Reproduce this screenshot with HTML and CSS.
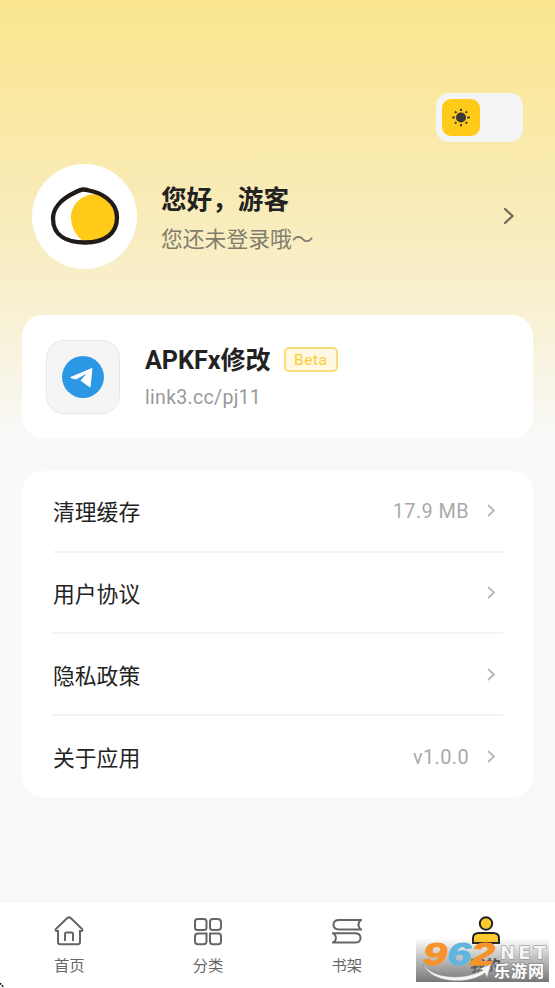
FILE: index.html
```html
<!DOCTYPE html>
<html lang="zh-CN">
<head>
<meta charset="UTF-8">
<title>我的</title>
<link rel="stylesheet" href="styles.css">
</head>
<body>
<div class="app">
  <main class="content">
    <div class="theme-switch">
      <span class="theme-thumb">
        <svg width="20" height="20" viewBox="0 0 20 20"><circle cx="10" cy="9.500" r="5" fill="#3b3935"/><g stroke="#3b3935" stroke-width="1.900"><path d="M10 .7V3M10 16v2.300M1.200 9.500h2.600M16.200 9.500h2.600M4 3.500l1.400 1.400M14.600 14.100l1.400 1.400M4 15.500l1.400-1.400M14.600 4.900 16 3.500"/></g></svg>
      </span>
    </div>
    <section class="profile">
      <div class="avatar">
        <svg width="105" height="105" viewBox="0 0 105 105"><path d="M73 31C53 26 39 39 39 53c0 11 6 21 14 25 19 2 32-7 33-24 0-9-5-17-13-23Z" fill="#ffca18"/><path d="M51 25.500c-3 0-6 2-10 4-12 6-20 15-20 25 0 18 15 24 32 24 20 0 32-9 32-25 0-17-17-25-28-27-3-1-4-1-6-1Z" fill="none" stroke="#211b18" stroke-width="4.300"/></svg>
      </div>
      <div class="profile-text">
        <h1>您好，游客</h1>
        <p>您还未登录哦～</p>
      </div>
      <svg class="profile-arrow" width="12" height="18" viewBox="0 0 12 18"><path d="m2 2 7.500 7L2 16" fill="none" stroke="#6e695b" stroke-width="2.200" stroke-linecap="round"/></svg>
    </section>
    <section class="card channel">
      <div class="channel-icon">
        <svg width="42" height="42" viewBox="0 0 42 42"><circle cx="21" cy="21" r="21" fill="#2c98e5"/><path d="M8.500 21.500 30 12.500 28 31l-9-6.500 7.500-8.500L14 23Z" fill="#fff" stroke="#fff" stroke-linejoin="round"/></svg>
      </div>
      <div class="channel-text">
        <div class="channel-title"><h2>APKFx修改</h2><span class="badge">Beta</span></div>
        <p class="channel-link">link3.cc/pj11</p>
      </div>
    </section>
    <section class="card settings">
      <div class="row"><span>清理缓存</span><span class="value">17.9 MB</span><svg width="10" height="15" viewBox="0 0 10 15"><path d="m2 2 6 5.500L2 13"/></svg></div>
      <div class="row"><span>用户协议</span><span class="value"></span><svg width="10" height="15" viewBox="0 0 10 15"><path d="m2 2 6 5.500L2 13"/></svg></div>
      <div class="row"><span>隐私政策</span><span class="value"></span><svg width="10" height="15" viewBox="0 0 10 15"><path d="m2 2 6 5.500L2 13"/></svg></div>
      <div class="row"><span>关于应用</span><span class="value">v1.0.0</span><svg width="10" height="15" viewBox="0 0 10 15"><path d="m2 2 6 5.500L2 13"/></svg></div>
    </section>
  </main>
  <nav class="tabs">
    <div class="tab">
      <svg width="32" height="32" viewBox="0 0 32 32"><path d="M5 16H3.500q-1.800-.8-.3-2.300L14 3.300q2-1.800 4 0l10.800 10.400q1.500 1.500-.3 2.300H27v11q0 2.200-2.200 2.200H7.200Q5 29.200 5 27ZM12 26v-7q0-1.500 1.500-1.500h5Q20 17.500 20 19v7"/></svg>
      <span>首页</span>
    </div>
    <div class="tab">
      <svg width="32" height="32" viewBox="0 0 32 32"><rect x="3" y="4" width="11.500" height="11" rx="2.500"/><path d="M20.500 4h5q3.500 0 3.500 3v5q0 3-3.500 3h-5q-2.500 0-2.500-3V7q0-3 2.500-3ZM6 18.500h8.500v8q0 2.700-3 2.700H6q-3 0-3-2.700v-5q0-3 3-3ZM18 18.500h8.500q2.500 0 2.500 3v5q0 2.700-2.500 2.700h-6q-2.500 0-2.500-2.700Z"/></svg>
      <span>分类</span>
    </div>
    <div class="tab">
      <svg width="32" height="32" viewBox="0 0 32 32"><path d="M31 5H8Q2.500 5 2.500 9.700t5.500 4.700h23M29.500 5q-4 4.700 0 9.400M1 18.200h23q5.500 0 5.500 4.700T24 27.600H1M2.500 18.200q5 4.700 0 9.400"/></svg>
      <span>书架</span>
    </div>
    <div class="tab active">
      <svg width="32" height="32" viewBox="0 0 32 32"><circle cx="16" cy="8.500" r="6.200"/><path d="M3 28v-5q0-5 6-5h14q6 0 6 5v5Z"/></svg>
      <span>我的</span>
    </div>
  </nav>
  <svg class="corner" width="4" height="5" viewBox="0 0 4 5"><path d="m0 0 4 5" stroke="#111" stroke-width="1.500" stroke-dasharray="2 1"/></svg>
  <svg class="watermark" width="133" height="44" viewBox="0 0 133 44">
    <defs><linearGradient id="shade" x1="0" y1="0" x2="0" y2="1"><stop offset="0" stop-color="#777" stop-opacity="0"/><stop offset="1" stop-color="#777"/></linearGradient></defs>
    <rect width="133" height="44" fill="url(#shade)"/>
    <g class="wm-number"><text x="7" y="27" textLength="24" lengthAdjust="spacingAndGlyphs" fill="#f7932a" stroke="#f7932a">9</text><text x="31" y="27" textLength="24" lengthAdjust="spacingAndGlyphs" fill="#60b5df" stroke="#60b5df">6</text><text x="55" y="27" textLength="24" lengthAdjust="spacingAndGlyphs" fill="#f7932a" stroke="#f7932a">2</text></g>
    <path d="M7 26C17 42 51 42 67 32l-4-1 12-5-4 14-2-5C53 47 15 46 7 26Z" fill="#f5f5f5" stroke="#888" stroke-width=".5"/>
    <text class="wm-net" x="84" y="21" textLength="46" lengthAdjust="spacing">NET</text>
    <text class="wm-cn" x="78" y="39" textLength="50">乐游网</text>
  </svg>
</div>
</body>
</html>
```
FILE: styles.css
```css
* { box-sizing: border-box; }
body { margin: 0; font-family: Roboto, "Noto Sans CJK SC", sans-serif; color: #222; }
h1, h2, p { margin: 0; }
svg { display: block; flex: none; }
.app {
  position: relative;
  height: 988px;
  display: flex;
  flex-direction: column;
  overflow: hidden;
  background: linear-gradient(#fae68f 0, #fae8a0 90px, #f9ebb5 190px, #f8f0cf 300px, #f9f9f9 440px);
}
.content { flex: 1; padding: 93px 22px 0; }
.theme-switch {
  width: 87px; height: 49px;
  margin: 0 10px 22px auto;
  padding: 6px;
  border-radius: 13px;
  background: #f5f5f5;
}
.theme-thumb {
  width: 38px; height: 37px;
  display: flex; align-items: center; justify-content: center;
  border-radius: 9px;
  background: #ffca18;
}
.profile { height: 104.500px; margin: 0 18px 46.500px 10px; display: flex; align-items: center; }
.avatar { width: 105px; height: 105px; border-radius: 50%; background: #fff; }
.profile-text { flex: 1; padding: 7px 0 0 24px; }
.profile-text h1 { font-size: 25.600px; line-height: 40px; font-weight: 700; }
.profile-text p { font-size: 21.800px; line-height: 39px; color: #817d6c; font-weight: 400; }
.card { background: #fff; border-radius: 21px; }
.channel { height: 123px; margin-bottom: 33px; padding: 0 24px; display: flex; align-items: center; gap: 25px; }
.channel-icon {
  width: 74px; height: 74px;
  display: flex; align-items: center; justify-content: center;
  border: 1.500px solid #e8e8e8;
  border-radius: 18px;
  background: #f5f5f5;
}
.channel-text { padding-top: 5px; }
.channel-title { display: flex; align-items: center; gap: 13px; height: 38px; }
.channel-title h2 { font-size: 25.100px; line-height: 38px; font-weight: 700; }
.badge {
  width: 54px; height: 25px;
  margin-top: -3px;
  border: 2px solid #fbdc7b;
  border-radius: 5px;
  background: #fff8e2;
  color: #fccd36;
  font-size: 15.500px; line-height: 23px; letter-spacing: .5px;
  text-align: center;
}
.channel-link { font-size: 19.500px; line-height: 36px; letter-spacing: .3px; color: #999; }
.settings { height: 326px; padding: 0 30px 0 31px; }
.row { height: 81.700px; display: flex; align-items: center; border-bottom: 2px solid #f3f3f3; font-size: 21.800px; }
.row:last-child { border-bottom: 0; }
.row svg { margin-right: 7px; }
.row path { fill: none; stroke: #b7b7b7; stroke-width: 1.800; }
.value { margin: 2px 17px 0 auto; font-size: 19.900px; letter-spacing: .4px; color: #aaa; }
.tabs { height: 87px; display: flex; background: #fff; border-top: 1px solid #f3f3f3; }
.tab { flex: 1; padding-top: 13px; display: flex; flex-direction: column; align-items: center; color: #666; font-size: 15.300px; line-height: 24px; gap: 7px; }
.tab path, .tab rect, .tab circle { fill: none; stroke: #666; stroke-width: 2; }
.tab.active { color: #222; font-weight: 700; }
.tab.active path, .tab.active circle { fill: #fccb2b; stroke: #222; }
.corner { position: absolute; left: 0; bottom: 0; }
.watermark { position: absolute; left: 416px; top: 938px; }
.wm-number { font: italic 700 31px "Liberation Sans", sans-serif; stroke-width: 1; }
.wm-net { font: 700 18px "DejaVu Sans", sans-serif; fill: #f5f5f5; stroke: #888; stroke-width: 1; paint-order: stroke; }
.wm-cn { font: 700 16px "Noto Sans CJK SC", sans-serif; fill: #fff; stroke: #888; stroke-width: 1.500; paint-order: stroke; }
```
